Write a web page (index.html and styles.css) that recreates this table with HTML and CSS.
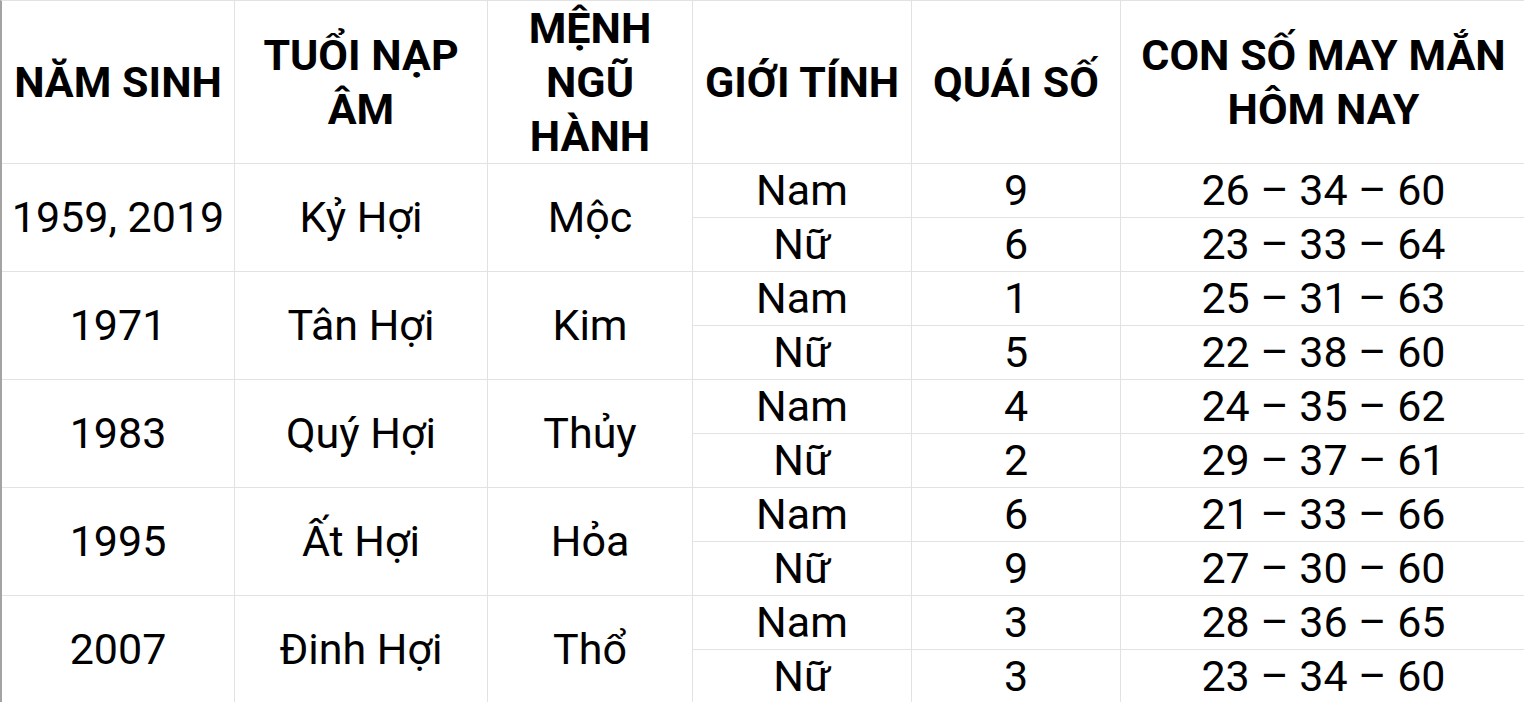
FILE: index.html
```html
<!DOCTYPE html>
<html lang="vi">
<head>
<meta charset="utf-8">
<title>Con số may mắn tuổi Hợi</title>
<link rel="stylesheet" href="styles.css">
</head>
<body>
<table class="lucky">
  <thead>
    <tr>
      <th class="c1">NĂM SINH</th>
      <th class="c2">TUỔI NẠP<br>ÂM</th>
      <th class="c3">MỆNH<br>NGŨ<br>HÀNH</th>
      <th class="c4">GIỚI TÍNH</th>
      <th class="c5">QUÁI SỐ</th>
      <th class="c6">CON SỐ MAY MẮN<br>HÔM NAY</th>
    </tr>
  </thead>
  <tbody>
    <tr><td rowspan="2">1959, 2019</td><td rowspan="2">Kỷ Hợi</td><td rowspan="2">Mộc</td><td>Nam</td><td>9</td><td>26 – 34 – 60</td></tr>
    <tr><td>Nữ</td><td>6</td><td>23 – 33 – 64</td></tr>
    <tr><td rowspan="2">1971</td><td rowspan="2">Tân Hợi</td><td rowspan="2">Kim</td><td>Nam</td><td>1</td><td>25 – 31 – 63</td></tr>
    <tr><td>Nữ</td><td>5</td><td>22 – 38 – 60</td></tr>
    <tr><td rowspan="2">1983</td><td rowspan="2">Quý Hợi</td><td rowspan="2">Thủy</td><td>Nam</td><td>4</td><td>24 – 35 – 62</td></tr>
    <tr><td>Nữ</td><td>2</td><td>29 – 37 – 61</td></tr>
    <tr><td rowspan="2">1995</td><td rowspan="2">Ất Hợi</td><td rowspan="2">Hỏa</td><td>Nam</td><td>6</td><td>21 – 33 – 66</td></tr>
    <tr><td>Nữ</td><td>9</td><td>27 – 30 – 60</td></tr>
    <tr><td rowspan="2">2007</td><td rowspan="2">Đinh Hợi</td><td rowspan="2">Thổ</td><td>Nam</td><td>3</td><td>28 – 36 – 65</td></tr>
    <tr><td>Nữ</td><td>3</td><td>23 – 34 – 60</td></tr>
  </tbody>
</table>
</body>
</html>
```
FILE: styles.css
```css
html, body {
  margin: 0;
  padding: 0;
  background: #ffffff;
  overflow: hidden;
}

.lucky {
  border-collapse: separate;
  border-spacing: 0;
  table-layout: fixed;
  width: 1527px;
  border-top: 1px solid #e2e2e2;
  border-left: 2px solid #a3a3a3;
  font-family: Roboto, "Liberation Sans", sans-serif;
  font-size: 43px;
  color: #000000;
}

.lucky th,
.lucky td {
  box-sizing: border-box;
  padding: 0;
  text-align: center;
  vertical-align: middle;
  border-right: 1px solid #e2e2e2;
  border-bottom: 1px solid #e2e2e2;
  white-space: nowrap;
}

.lucky th {
  height: 163px;
  font-weight: 700;
  line-height: 54px;
}

.lucky td {
  height: 54px;
  font-weight: 400;
  line-height: 53px;
}

.c1 { width: 233px; }
.c2 { width: 253px; }
.c3 { width: 205px; }
.c4 { width: 219px; }
.c5 { width: 209px; }
.c6 { width: 406px; }
```
